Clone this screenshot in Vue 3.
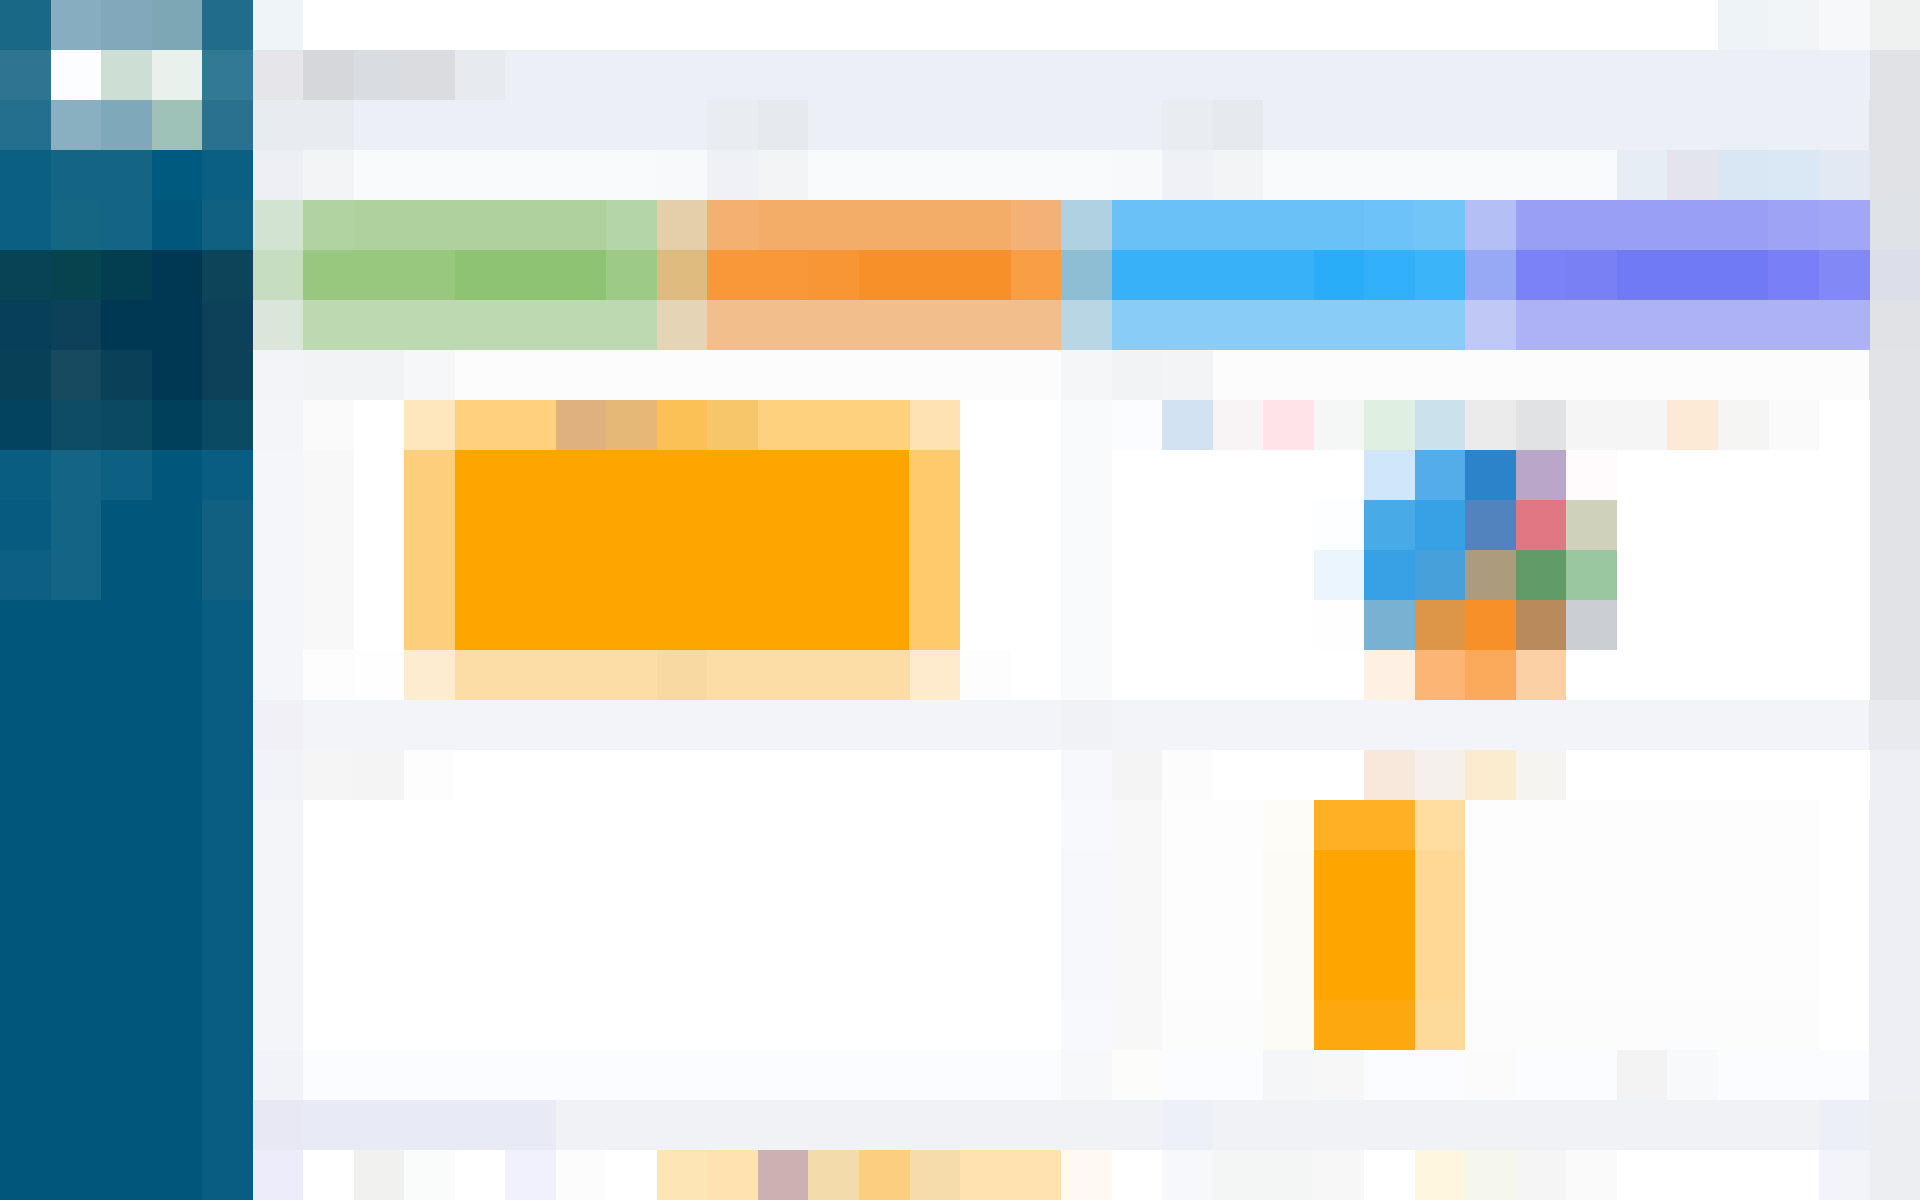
<script setup>
// Each row is a list of tiles: a hex colour, with "*n" when it spans n columns.
const parse = (rows) =>
  rows.map((row) =>
    row.split(' ').map((tile) => {
      const [color, span] = tile.split('*')
      return { color: '#' + color, span: Number(span || 1) }
    })
  )

const sidebar = [
  {
    name: 'brand',
    rows: parse([
      '186886 86adc0 82a9bb 7ea7b5 206c8a',
      '2f7592 fcfdff cddfd4 e8f1eb 327996',
      '226f8e 89b0c1 80a8bb 9ec2b8 29718f'
    ])
  },
  {
    name: 'menu',
    rows: parse([
      '0b5f83 146485*2 005a7f 0b5f83',
      '0b5f83 146683 136485 00577c 0f6081',
      '054355 05434f 033e50 003853 0e4459',
      '063f57 0d4159 003853*2 0d4159',
      '084058 17495f 0b4158 003853 0d4159',
      '03435f 0e4b64 0a4960 00405b 0b4a63',
      '085d80 146485 0e6083 00577c 0a5d82',
      '085b80 146485 00577c*2 116082',
      '0d6083 146485 00577c*2 116082',
      ...Array(12).fill('00577c*4 0a5d82')
    ])
  }
]

const plot = 'f5f6f9 f8f8f8 ffffff fdcf7c ffa500*9 ffca6c ffffff*2 f9fafc '
const bar =
  'f4f5f8 ffffff*15 f7f8fb f8f8f8 fdfdfd*2 fcfbf6 ffa500*2 fed894 fdfdfd*7 ffffff edeff4'

const content = [
  {
    name: 'topbar',
    rows: parse(['eff4f8 ffffff*28 edf3f6 f1f5f7 f7f8fa eff1f0'])
  },
  {
    name: 'heading',
    rows: parse([
      'e5e5ea d6d7db d9dce1 dbdce0 e7eaef eceff5*27 e1e2e6',
      'e8ebf0*2 eceff5*7 e9ecf1 e6e9ee eceff5*7 e9ecf1 e6e9ee eceff5*12 e1e2e6',
      'eeeff4 f3f4f6 f9fafc*6 f7f9fb f0f1f6 f3f4f6 f9fafc*6 f7f9fb f0f1f6 f3f4f6 f9fafc*6 f8fafb e6edf5 e4e4ec d9e6f3 dae7f4 e2e9f3 e1e2e6'
    ])
  },
  {
    name: 'summary',
    rows: parse([
      'd2e3d1 b1d3a1 aed19e*5 b4d5a7 e5ceaa f4b071 f4ad69*5 f3b175 b0d1e2 69c1f7*5 6dc3f9 72c6f7 b4c0f5 999ff4*5 9fa3f6 a1a7f5 dfe2e6',
      'c6ddc2 97c87e*3 8fc374*3 9dca86 debb7e f99838*2 f89636 f79029*3 f99e44 8dbed3 39b1f9*4 2aadf9 32b0fa 3cb4f9 97a8f5 7b82f7 7880f4 707af5*3 797ff6 8288f6 dcdfe9',
      'dae6da bcd9b2*7 e6d4b6 f2be8c*7 b9d6e4 88ccf7*7 c0c8f5 adb1f5*7 e1e2e6'
    ])
  },
  {
    name: 'charts',
    rows: parse([
      'f2f4f8 f2f3f5*2 f6f7f9 fcfcfc*12 f5f6f8 f1f3f5 f3f4f6 fcfcfc*13 e2e3e7',
      'f4f5f8 fafafa ffffff fee7bc ffd17f*2 dfb17e e5b878 fbc156 f7c56a fed17f*3 fee2b3 ffffff*2 f9fafc fbfcff d3e2f1 f8f4f5 fee3e8 f5f6f6 dfefe1 cbe1ec ebebeb e1e2e4 f5f5f5*2 fdead6 f5f6f3 fafafa ffffff e2e3e7',
      plot + 'ffffff*5 d0e6fa 54ade9 2b83c9 baa6c7 fffafc ffffff*5 e2e3e7',
      plot + 'ffffff*4 fcfeff 49aae8 36a2e5 5283be e17783 cfd1bb ffffff*5 e2e3e7',
      plot + 'ffffff*4 ebf5fe 36a2e5 48a0da ac9b7d 609b68 9ac6a0 ffffff*5 e2e3e7',
      plot + 'ffffff*4 fefeff 79b1d2 dd9647 f79029 b98a5b cbced2 ffffff*5 e2e3e7',
      'f5f6f9 fdfdfd fefefe fdecd0 fddda6*4 f8d9a2 fddda6*4 feeacc fdfdfd ffffff f9fafc ffffff*5 fef1e4 fcb574 fba95b fcd0a5 ffffff*6 e2e3e7',
      'f0f0f6 f3f4f9*15 f1f2f6 f3f4f9*15 e9eaee'
    ])
  },
  {
    name: 'reports',
    rows: parse([
      'f2f3f8 f5f5f5 f4f4f4 fdfdfd ffffff*12 f7f8fb f4f4f4 fcfcfc ffffff*3 f8e8dc f6f0ed fbebcf f6f4f0 ffffff*6 edeff4',
      'f4f5f8 ffffff*15 f8f9fc f8f8f8 fdfdfd*2 fefcf7 ffb024*2 ffdda1 fdfdfd*7 ffffff edeff4',
      bar,
      bar,
      bar,
      'f4f5f8 ffffff*15 f8f9fc f8f8f8 fcfcfc*2 fcfbf6 fda80f*2 fdda99 fcfcfc*7 ffffff edeff4',
      'f2f3f8 fafcff*15 f7f8fa fcfcfb fafcff*2 f5f6f8 f7f7f7 fafcff*2 fbfbfb fafcff*2 f3f3f3 f8f9fb fafcff*3 edeff4'
    ])
  },
  {
    name: 'footer',
    rows: parse([
      'e7e8f4 e8eaf6*5 f0f2f6*12 edf0f7 f0f2f6*12 ecf0f6 edeef2',
      'edecfa ffffff f1f1ef fafcfb ffffff f1f1fd fcfcfc ffffff fee5b5 ffe2b0 cdb1b2 f4dbab fccf80 f5dcaa ffe2b0*2 fff9f2 ffffff f7f8fc f3f6f4*2 f7f7f7 ffffff fef6df f5f6ec f5f5f5 fafafa ffffff*4 f3f4fa edeef2'
    ])
  }
]
</script>

<template>
  <div class="page">
    <aside class="sidebar">
      <section v-for="part in sidebar" :key="part.name" :class="part.name">
        <div v-for="(row, r) in part.rows" :key="r" class="row">
          <span
            v-for="(tile, t) in row"
            :key="t"
            class="tile"
            :style="{ flexGrow: tile.span, backgroundColor: tile.color }"
          ></span>
        </div>
      </section>
    </aside>
    <main class="content">
      <section v-for="part in content" :key="part.name" :class="part.name">
        <div v-for="(row, r) in part.rows" :key="r" class="row">
          <span
            v-for="(tile, t) in row"
            :key="t"
            class="tile"
            :style="{ flexGrow: tile.span, backgroundColor: tile.color }"
          ></span>
        </div>
      </section>
    </main>
  </div>
</template>

<style>
body {
  margin: 0;
  background: #eceff5;
}
</style>

<style scoped>
.page {
  display: flex;
  min-height: 100vh;
}
.sidebar {
  flex: 5 1 0;
  min-width: 0;
  background: #00577c;
}
.content {
  flex: 33 1 0;
  min-width: 0;
}
.row {
  display: flex;
  height: 50px;
}
.tile {
  flex: 1 1 0;
  min-width: 0;
}
</style>
